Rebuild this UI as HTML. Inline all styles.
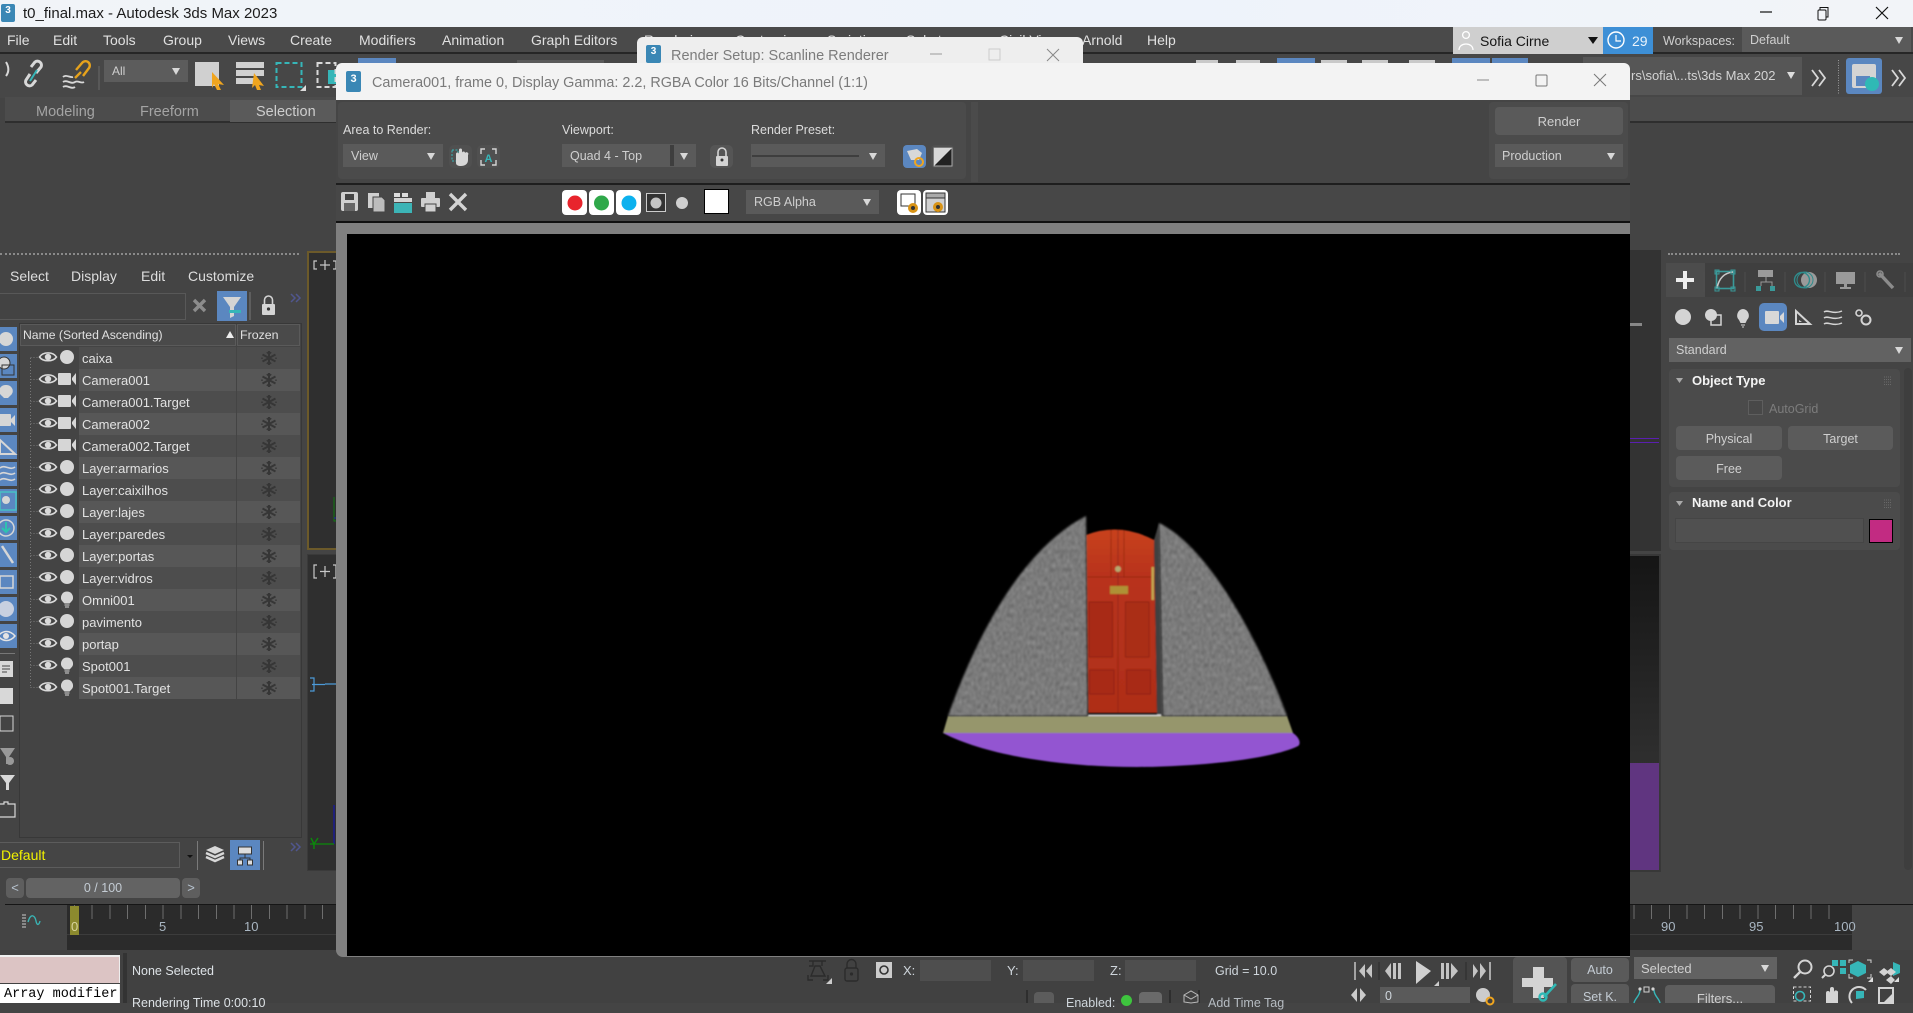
<!DOCTYPE html>
<html><head><meta charset="utf-8"><title>t0_final.max - Autodesk 3ds Max 2023</title>
<style>
html,body{margin:0;padding:0;width:1913px;height:1003px;overflow:hidden;background:#444;font-family:"Liberation Sans",sans-serif;font-size:13px;color:#d6d6d6}
.a,.t,.dd{position:absolute;box-sizing:border-box}
.t{white-space:nowrap;line-height:16px;height:16px}
.m{font-size:14px;color:#e0e0e0;top:32px}
.dd{background:#5a5a5a;color:#cfcfcf;line-height:25px;padding-left:8px;font-size:12.5px}
.dd:after{content:"";position:absolute;right:8px;top:50%;margin-top:-3px;border:4.5px solid transparent;border-top:7px solid #d8d8d8;border-bottom:0}
.btn{position:absolute;box-sizing:border-box;background:#5b5b5b;border-radius:4px;text-align:center;color:#cfcfcf;font-size:12.5px}
.row{position:absolute;left:79px;width:221px;height:22px}
.row b{position:absolute;left:0;top:0;width:157px;height:22px;font-weight:normal;font-size:13px;line-height:24px;padding-left:3px;color:#e2e2e2;box-sizing:border-box}
.row i{position:absolute;left:158px;top:0;width:63px;height:22px}
.o b,.o i{background:#4d4d4d}.e b,.e i{background:#575757}
svg{position:absolute;left:0;top:0;overflow:visible}
</style></head><body>

<!-- title bar -->
<div class="a" style="left:0;top:0;width:1913px;height:27px;background:linear-gradient(90deg,#f1f4f8,#eef3fb 60%,#f2f4f8)"></div>
<div class="a" style="left:1px;top:4px;width:14px;height:18px;background:#3a87b5;border-radius:2px;color:#fff;font:bold 10px/14px 'Liberation Sans',sans-serif;text-align:center">3</div>
<div class="t" style="left:23px;top:6px;font-size:15px;color:#1c1c1c">t0_final.max - Autodesk 3ds Max 2023</div>

<!-- menu -->
<div class="a" style="left:0;top:27px;width:1913px;height:27px;background:#4a4a4a;border-bottom:2px solid #262626"></div>
<div class="t m" style="left:7px">File</div><div class="t m" style="left:53px">Edit</div><div class="t m" style="left:103px">Tools</div><div class="t m" style="left:163px">Group</div><div class="t m" style="left:228px">Views</div><div class="t m" style="left:290px">Create</div><div class="t m" style="left:359px">Modifiers</div><div class="t m" style="left:442px">Animation</div><div class="t m" style="left:531px">Graph Editors</div><div class="t m" style="left:644px">Rendering</div><div class="t m" style="left:735px">Customize</div><div class="t m" style="left:827px">Scripting</div><div class="t m" style="left:906px">Substance</div><div class="t m" style="left:999px">Civil View</div><div class="t m" style="left:1082px">Arnold</div><div class="t m" style="left:1147px">Help</div>
<div class="a" style="left:1453px;top:27px;width:150px;height:27px;background:#cfcfcf"></div>
<div class="t" style="left:1480px;top:33px;font-size:14px;color:#151515">Sofia Cirne</div>
<div class="a" style="left:1603px;top:27px;width:50px;height:27px;background:#3d8fd6"></div>
<div class="t" style="left:1632px;top:33px;font-size:14px;color:#eaf3fb">29</div>
<div class="t" style="left:1663px;top:33px;font-size:12.5px;color:#cfcfcf">Workspaces:</div>
<div class="dd" style="left:1742px;top:27px;width:169px;height:25px;line-height:26px;background:#5a5a5a">Default</div>

<!-- main toolbar -->
<div class="a" style="left:0;top:54px;width:1913px;height:44px;background:#474747"></div>
<div class="dd" style="left:104px;top:60px;width:84px;height:22px;line-height:23px;background:#5c5c5c;font-size:12px">All</div>
<div class="a" style="left:358px;top:58px;width:38px;height:8px;background:#5b87c0"></div>
<div class="a" style="left:517px;top:60px;width:87px;height:6px;background:#5a5a5a"></div>
<div class="a" style="left:1196px;top:60px;width:22px;height:6px;background:#c9c9c9"></div>
<div class="a" style="left:1236px;top:60px;width:24px;height:6px;background:#c9c9c9"></div>
<div class="a" style="left:1277px;top:58px;width:38px;height:8px;background:#5b87c0"></div>
<div class="a" style="left:1321px;top:60px;width:26px;height:6px;background:#c9c9c9"></div>
<div class="a" style="left:1362px;top:60px;width:26px;height:6px;background:#c9c9c9"></div>
<div class="a" style="left:1409px;top:60px;width:26px;height:6px;background:#c9c9c9"></div>
<div class="a" style="left:1452px;top:58px;width:38px;height:8px;background:#5b87c0"></div>
<div class="a" style="left:1492px;top:58px;width:36px;height:8px;background:#5b87c0"></div>
<div class="a" style="left:1583px;top:57px;width:219px;height:38px;background:#565656"></div>
<div class="t" style="left:1631px;top:68px;font-size:13px;color:#d4d4d4">rs\sofia\...ts\3ds Max 202</div>
<div class="a" style="left:1787px;top:72px;border:4.5px solid transparent;border-top:7px solid #ddd;border-bottom:0"></div>
<div class="a" style="left:1846px;top:58px;width:36px;height:36px;background:#5b87c0;border-radius:3px"></div>

<!-- ribbon -->
<div class="a" style="left:5px;top:97px;width:1908px;height:26px;background:#4c4c4c;border-bottom:2px solid #2e2e2e"></div>
<div class="t" style="left:36px;top:104px;font-size:14.5px;color:#a4a4a4">Modeling</div>
<div class="t" style="left:140px;top:104px;font-size:14.5px;color:#a4a4a4">Freeform</div>
<div class="a" style="left:230px;top:100px;width:106px;height:22px;background:#5a5a5a"></div>
<div class="t" style="left:256px;top:104px;font-size:14.5px;color:#cdcdcd">Selection</div>

<!-- dotted -->
<div class="a" style="left:0;top:253px;width:299px;height:2px;border-top:2px dotted #8a8a8a"></div>
<div class="a" style="left:1668px;top:253px;width:232px;height:2px;border-top:2px dotted #8a8a8a"></div>

<!-- left scene explorer -->
<div class="t" style="left:10px;top:268px;font-size:14px;color:#ddd">Select</div>
<div class="t" style="left:71px;top:268px;font-size:14px;color:#ddd">Display</div>
<div class="t" style="left:141px;top:268px;font-size:14px;color:#ddd">Edit</div>
<div class="t" style="left:188px;top:268px;font-size:14px;color:#ddd">Customize</div>
<div class="a" style="left:-2px;top:293px;width:188px;height:27px;background:#434343;border:1px solid #585858"></div>
<div class="a" style="left:217px;top:291px;width:30px;height:30px;background:#5b87c0"></div>
<div class="a" style="left:19px;top:323px;width:283px;height:515px;border:1px solid #383838;background:#444"></div>
<div class="a" style="left:20px;top:324px;width:216px;height:22px;background:#4a4a4a;border:1px solid #5a5a5a"></div>
<div class="a" style="left:237px;top:324px;width:63px;height:22px;background:#4a4a4a;border:1px solid #5a5a5a"></div>
<div class="t" style="left:23px;top:327px;font-size:12.2px;color:#e0e0e0">Name (Sorted Ascending)</div>
<div class="t" style="left:240px;top:327px;font-size:12.4px;color:#e0e0e0">Frozen</div>

<div class="row o" style="top:347px"><b>caixa</b><i></i></div>
<div class="row e" style="top:369px"><b>Camera001</b><i></i></div>
<div class="row o" style="top:391px"><b>Camera001.Target</b><i></i></div>
<div class="row e" style="top:413px"><b>Camera002</b><i></i></div>
<div class="row o" style="top:435px"><b>Camera002.Target</b><i></i></div>
<div class="row e" style="top:457px"><b>Layer:armarios</b><i></i></div>
<div class="row o" style="top:479px"><b>Layer:caixilhos</b><i></i></div>
<div class="row e" style="top:501px"><b>Layer:lajes</b><i></i></div>
<div class="row o" style="top:523px"><b>Layer:paredes</b><i></i></div>
<div class="row e" style="top:545px"><b>Layer:portas</b><i></i></div>
<div class="row o" style="top:567px"><b>Layer:vidros</b><i></i></div>
<div class="row e" style="top:589px"><b>Omni001</b><i></i></div>
<div class="row o" style="top:611px"><b>pavimento</b><i></i></div>
<div class="row e" style="top:633px"><b>portap</b><i></i></div>
<div class="row o" style="top:655px"><b>Spot001</b><i></i></div>
<div class="row e" style="top:677px"><b>Spot001.Target</b><i></i></div>

<!-- left strip blue buttons -->
<div class="a" style="left:0;top:327px;width:17px;height:24px;background:#5b87c0"></div>
<div class="a" style="left:0;top:354px;width:17px;height:24px;background:#5b87c0"></div>
<div class="a" style="left:0;top:381px;width:17px;height:24px;background:#5b87c0"></div>
<div class="a" style="left:0;top:408px;width:17px;height:24px;background:#5b87c0"></div>
<div class="a" style="left:0;top:435px;width:17px;height:24px;background:#5b87c0"></div>
<div class="a" style="left:0;top:462px;width:17px;height:24px;background:#5b87c0"></div>
<div class="a" style="left:0;top:489px;width:17px;height:24px;background:#5b87c0"></div>
<div class="a" style="left:0;top:516px;width:17px;height:24px;background:#5b87c0"></div>
<div class="a" style="left:0;top:543px;width:17px;height:24px;background:#5b87c0"></div>
<div class="a" style="left:0;top:570px;width:17px;height:24px;background:#5b87c0"></div>
<div class="a" style="left:0;top:597px;width:17px;height:24px;background:#5b87c0"></div>
<div class="a" style="left:0;top:624px;width:17px;height:24px;background:#5b87c0"></div>
<div class="a" style="left:0;top:653px;width:15px;height:1px;background:#777"></div>

<!-- left bottom -->
<div class="a" style="left:-2px;top:842px;width:182px;height:26px;background:#454545;border:1px solid #5c5c5c"></div>
<div class="t" style="left:1px;top:847px;font-size:14px;color:#f2f200">Default</div>
<div class="a" style="left:197px;top:841px;width:1px;height:29px;background:#7a7a7a"></div>
<div class="a" style="left:230px;top:840px;width:30px;height:30px;background:#5b87c0"></div>
<div class="a" style="left:263px;top:841px;width:1px;height:29px;background:#7a7a7a"></div>
<div class="a" style="left:6px;top:878px;width:18px;height:20px;background:#5e5e5e;border-radius:4px;text-align:center;line-height:20px;color:#b8c4d0;font-size:13px">&lt;</div>
<div class="a" style="left:26px;top:878px;width:154px;height:20px;background:#636363;border-radius:4px;text-align:center;line-height:21px;color:#c4ccd4;font-size:12.5px">0 / 100</div>
<div class="a" style="left:182px;top:878px;width:18px;height:20px;background:#5e5e5e;border-radius:4px;text-align:center;line-height:20px;color:#b8c4d0;font-size:13px">&gt;</div>

<!-- viewports -->
<div class="a" style="left:307px;top:251px;width:40px;height:299px;background:#2f2f2f;border:2px solid #6c5a2a"></div>
<div class="a" style="left:307px;top:554px;width:40px;height:317px;background:#2f2f2f;border:1px solid #3a3a3a"></div>
<div class="a" style="left:1630px;top:250px;width:31px;height:301px;background:#333"></div>
<div class="a" style="left:1630px;top:438px;width:29px;height:1px;background:#5a1fb0"></div>
<div class="a" style="left:1630px;top:442px;width:29px;height:1px;background:#5a1fb0"></div>
<div class="a" style="left:1630px;top:323px;width:12px;height:3px;background:#888"></div>
<div class="a" style="left:1630px;top:554px;width:31px;height:318px;background:#383838"></div>
<div class="a" style="left:1630px;top:556px;width:29px;height:314px;background:linear-gradient(#151515,#3c3c3c)"></div>
<div class="a" style="left:1630px;top:763px;width:29px;height:107px;background:#603580"></div>

<!-- right panel -->
<div class="a" style="left:1666px;top:263px;width:247px;height:34px;background:#3f3f3f"></div>
<div class="a" style="left:1666px;top:263px;width:39px;height:34px;background:#4c4c4c"></div>
<div class="a" style="left:1759px;top:303px;width:28px;height:28px;background:#5b87c0;border-radius:5px"></div>
<div class="dd" style="left:1669px;top:338px;width:242px;height:24px;background:#626262;padding-left:7px;line-height:25px;font-size:12.5px">Standard</div>
<div class="a" style="left:1669px;top:369px;width:231px;height:118px;background:#4b4b4b;border-radius:4px"></div>
<div class="t" style="left:1692px;top:373px;font-size:13px;font-weight:bold;color:#f4f4f4">Object Type</div>
<div class="a" style="left:1748px;top:400px;width:15px;height:15px;background:#484848;border:1px solid #5e5e5e"></div>
<div class="t" style="left:1769px;top:401px;font-size:12.5px;color:#7c7c7c">AutoGrid</div>
<div class="btn" style="left:1676px;top:426px;width:106px;height:24px;line-height:26px">Physical</div>
<div class="btn" style="left:1788px;top:426px;width:105px;height:24px;line-height:26px">Target</div>
<div class="btn" style="left:1676px;top:456px;width:106px;height:24px;line-height:26px">Free</div>
<div class="a" style="left:1669px;top:492px;width:231px;height:58px;background:#4b4b4b;border-radius:4px"></div>
<div class="t" style="left:1692px;top:495px;font-size:13px;font-weight:bold;color:#f4f4f4">Name and Color</div>
<div class="a" style="left:1675px;top:518px;width:189px;height:25px;background:#505050;border:1px solid #454545"></div>
<div class="a" style="left:1869px;top:519px;width:24px;height:24px;background:#c22b82;border:1px solid #000"></div>
<div class="a" style="left:1904px;top:368px;width:8px;height:502px;background:#3e3e3e;border-radius:4px"></div>

<!-- timeline -->
<div class="a" style="left:5px;top:904px;width:1908px;height:1px;background:#161616"></div>
<div class="a" style="left:67px;top:905px;width:1785px;height:45px;background:#2b2b2b"></div>
<div class="a" style="left:67px;top:934px;width:1785px;height:1px;background:#3c3c3c"></div>
<div class="a" style="left:74px;top:905px;width:1771px;height:14px;background:repeating-linear-gradient(90deg,#6e6e6e 0,#6e6e6e 1px,transparent 1px,transparent 17.72px)"></div>
<div class="a" style="left:70px;top:906px;width:9px;height:29px;background:#8c8a2e"></div>
<div class="t" style="left:71px;top:919px;font-size:13px;color:#d8d49c">0</div>
<div class="t" style="left:159px;top:919px;font-size:13px;color:#a9b6c2">5</div>
<div class="t" style="left:244px;top:919px;font-size:13px;color:#a9b6c2">10</div>
<div class="t" style="left:1661px;top:919px;font-size:13px;color:#a9b6c2">90</div>
<div class="t" style="left:1749px;top:919px;font-size:13px;color:#a9b6c2">95</div>
<div class="t" style="left:1834px;top:919px;font-size:13px;color:#a9b6c2">100</div>

<!-- status -->
<div class="a" style="left:0;top:950px;width:1913px;height:53px;background:#414141"></div>
<div class="a" style="left:0;top:955px;width:120px;height:28px;background:#dcc4c4;border-top:2px solid #eee;border-right:1px solid #eee"></div>
<div class="a" style="left:0;top:984px;width:120px;height:19px;background:#fff;border-right:1px solid #eee"></div>
<div class="t" style="left:4px;top:987px;font:13.5px/16px 'Liberation Mono',monospace;color:#000">Array modifier</div>
<div class="a" style="left:123px;top:953px;width:4px;height:50px;background:#333"></div>
<div class="t" style="left:132px;top:963px;font-size:12.5px;color:#dde2e6">None Selected</div>
<div class="t" style="left:132px;top:995px;font-size:12.5px;color:#dde2e6">Rendering Time  0:00:10</div>

<div class="t" style="left:903px;top:963px;font-size:13px;color:#cfd6dc">X:</div>
<div class="a" style="left:920px;top:960px;width:71px;height:21px;background:#4e4e4e"></div>
<div class="t" style="left:1007px;top:963px;font-size:13px;color:#cfd6dc">Y:</div>
<div class="a" style="left:1023px;top:960px;width:71px;height:21px;background:#4e4e4e"></div>
<div class="t" style="left:1110px;top:963px;font-size:13px;color:#cfd6dc">Z:</div>
<div class="a" style="left:1125px;top:960px;width:71px;height:21px;background:#4e4e4e"></div>
<div class="t" style="left:1215px;top:963px;font-size:12.5px;color:#cfd6dc">Grid = 10.0</div>
<div class="a" style="left:1034px;top:992px;width:20px;height:11px;background:#5c5c5c;border-radius:4px 4px 0 0"></div>
<div class="t" style="left:1066px;top:995px;font-size:12.5px;color:#cfd6dc">Enabled:</div>
<div class="a" style="left:1121px;top:995px;width:11px;height:11px;background:#3ec43e;border-radius:50%"></div>
<div class="a" style="left:1139px;top:992px;width:23px;height:11px;background:#6a6a6a;border-radius:4px 4px 0 0"></div>
<div class="t" style="left:1208px;top:995px;font-size:12.5px;color:#b6bcc2">Add Time Tag</div>
<div class="a" style="left:1380px;top:987px;width:90px;height:16px;background:#5a5a5a"></div>
<div class="t" style="left:1385px;top:988px;font-size:12.5px;color:#cfd6dc">0</div>
<div class="a" style="left:1513px;top:957px;width:54px;height:46px;background:#545454;border-radius:4px 4px 0 0"></div>
<div class="btn" style="left:1571px;top:958px;width:58px;height:24px;line-height:25px;background:#5a5a5a;color:#c4ccd4">Auto</div>
<div class="btn" style="left:1571px;top:984px;width:58px;height:19px;line-height:27px;background:#5a5a5a;color:#c4ccd4;border-radius:4px 4px 0 0">Set K.</div>
<div class="dd" style="left:1634px;top:957px;width:143px;height:22px;line-height:23px;background:#626262;padding-left:7px;font-size:13px">Selected</div>
<div class="btn" style="left:1665px;top:985px;width:110px;height:18px;line-height:28px;background:#5e5e5e;border-radius:4px 4px 0 0;font-size:13px">Filters...</div>

<!-- background icons -->
<svg width="1913" height="1003" viewBox="0 0 1913 1003" style="z-index:1">
<defs>
<g id="eye"><path d="M-8.5 0C-5 -5.5 5 -5.5 8.5 0C5 5 -5 5 -8.5 0Z" fill="none" stroke="#d9d9d9" stroke-width="1.6"/><circle r="3.2" fill="#d9d9d9"/></g>
<circle id="sph" r="7" fill="#d6d6d6"/>
<g id="cam"><rect x="-9" y="-6" width="13" height="12" rx="1" fill="#d6d6d6"/><path d="M5 -1L9 -6V6L5 1Z" fill="#d6d6d6"/></g>
<g id="bulb" fill="#d6d6d6"><path d="M0 -7.5A6 6 0 0 1 4 3L2.5 4.5H-2.5L-4 3A6 6 0 0 1 0 -7.5Z"/><rect x="-2.5" y="5.5" width="5" height="1"/><rect x="-2" y="7.5" width="4" height="1"/></g>
<g id="snow" stroke="#363636" stroke-width="2" fill="none"><path d="M0 -7V7M-6.500 -3.500L6.500 3.500M-6.500 3.500L6.500 -3.500"/><path d="M-2.200 -5.800L0 -3.800L2.200 -5.800M-2.200 5.800L0 3.800L2.200 5.800M-7 -.500V1M7 -.500V1" stroke-width="1.400"/></g>
</defs>

<!-- tree -->
<path d="M30.5 358V688M30.5 357.5H39M30.5 379.5H39M30.5 401.5H39M30.5 423.5H39M30.5 445.5H39M30.5 467.5H39M30.5 489.5H39M30.5 511.5H39M30.5 533.5H39M30.5 555.5H39M30.5 577.5H39M30.5 599.5H39M30.5 621.5H39M30.5 643.5H39M30.5 665.5H39M30.5 687.5H39" stroke="#777" stroke-dasharray="1 2" fill="none"/>
<use href="#eye" x="48" y="357"/><use href="#eye" x="48" y="379"/><use href="#eye" x="48" y="401"/><use href="#eye" x="48" y="423"/><use href="#eye" x="48" y="445"/><use href="#eye" x="48" y="467"/><use href="#eye" x="48" y="489"/><use href="#eye" x="48" y="511"/><use href="#eye" x="48" y="533"/><use href="#eye" x="48" y="555"/><use href="#eye" x="48" y="577"/><use href="#eye" x="48" y="599"/><use href="#eye" x="48" y="621"/><use href="#eye" x="48" y="643"/><use href="#eye" x="48" y="665"/><use href="#eye" x="48" y="687"/>
<use href="#sph" x="67" y="357"/><use href="#cam" x="67" y="379"/><use href="#cam" x="67" y="401"/><use href="#cam" x="67" y="423"/><use href="#cam" x="67" y="445"/><use href="#sph" x="67" y="467"/><use href="#sph" x="67" y="489"/><use href="#sph" x="67" y="511"/><use href="#sph" x="67" y="533"/><use href="#sph" x="67" y="555"/><use href="#sph" x="67" y="577"/><use href="#bulb" x="67" y="599"/><use href="#sph" x="67" y="621"/><use href="#sph" x="67" y="643"/><use href="#bulb" x="67" y="665"/><use href="#bulb" x="67" y="687"/>
<use href="#snow" x="269" y="358"/><use href="#snow" x="269" y="380"/><use href="#snow" x="269" y="402"/><use href="#snow" x="269" y="424"/><use href="#snow" x="269" y="446"/><use href="#snow" x="269" y="468"/><use href="#snow" x="269" y="490"/><use href="#snow" x="269" y="512"/><use href="#snow" x="269" y="534"/><use href="#snow" x="269" y="556"/><use href="#snow" x="269" y="578"/><use href="#snow" x="269" y="600"/><use href="#snow" x="269" y="622"/><use href="#snow" x="269" y="644"/><use href="#snow" x="269" y="666"/><use href="#snow" x="269" y="688"/>
<path d="M230 331L234 338H226Z" fill="#eee"/>

<!-- explorer top icons -->
<path d="M194 300L205 311M205 300L194 311" stroke="#8c8c8c" stroke-width="3.4"/>
<path d="M223 297H241L234 307V316L230 318V307Z" fill="#d4d4d4"/><path d="M229 310H241V313H229Z" fill="#36b6b8"/>
<path d="M250 292V320" stroke="#777"/>
<rect x="262" y="304" width="13" height="11" rx="1" fill="#d4d4d4"/><path d="M264.5 304V300A4 4 0 0 1 272.5 300V304" stroke="#d4d4d4" stroke-width="1.6" fill="none"/><circle cx="268.5" cy="309" r="1.6" fill="#333"/>
<path d="M291 294L295 298L291 302M296 294L300 298L296 302M291 843L295 847L291 851M296 843L300 847L296 851" stroke="#50568e" stroke-width="1.5" fill="none"/>

<!-- left strip glyphs -->
<circle cx="6" cy="339" r="7" fill="#d6d6d6"/>
<circle cx="4" cy="363" r="6" fill="#d6d6d6" stroke="#333"/><rect x="2" y="365" width="12" height="10" fill="none" stroke="#333"/>
<path d="M6 385A6 6 0 0 1 10 396L8 398H4L2 396A6 6 0 0 1 6 385Z" fill="#d6d6d6"/>
<rect x="-2" y="414" width="13" height="12" rx="1" fill="#d6d6d6"/><path d="M11 419L15 415V426L11 422Z" fill="#d6d6d6"/>
<path d="M0 440L15 454H0Z" fill="none" stroke="#d6d6d6" stroke-width="2"/>
<path d="M0 468C5 464 10 471 15 467M0 474C5 470 10 477 15 473M0 480C5 476 10 483 15 479" stroke="#d6d6d6" stroke-width="1.6" fill="none"/>
<rect x="0" y="492" width="16" height="18" fill="none" stroke="#48c0c2" stroke-width="1.5"/><circle cx="6" cy="500" r="4" fill="#d6d6d6"/>
<circle cx="6" cy="528" r="8" fill="none" stroke="#d6d6d6" stroke-width="1.5"/><path d="M6 522V532M2 528L6 532L10 528" stroke="#2fc2b0" stroke-width="2" fill="none"/>
<path d="M2 546L13 563" stroke="#d6d6d6" stroke-width="2.5"/>
<rect x="0" y="576" width="13" height="12" fill="none" stroke="#d6d6d6" stroke-width="1.5"/>
<circle cx="6" cy="609" r="8" fill="#c8d0e0"/>
<path d="M-2 636C3 630 10 630 15 636C10 642 3 642 -2 636Z" fill="none" stroke="#e4e4e4" stroke-width="1.5"/><circle cx="6" cy="636" r="3" fill="#e4e4e4"/>
<rect x="0" y="661" width="13" height="16" fill="#d8d8d8"/><path d="M2 666H10M2 669H10M2 672H7" stroke="#444"/>
<rect x="0" y="688" width="13" height="16" fill="#d8d8d8"/>
<rect x="0" y="716" width="13" height="15" fill="none" stroke="#d8d8d8"/>
<path d="M0 748H15L9 757V764H6V757Z" fill="#999"/><circle cx="10" cy="761" r="4" fill="#999"/>
<path d="M0 775H15L9 783V790H6V783Z" fill="#d8d8d8"/>
<path d="M0 804H4V802H8V804H15V817H0" fill="none" stroke="#d8d8d8" stroke-width="1.2"/>

<!-- layer icons -->
<path d="M187 855H193L190 858Z" fill="#111"/>
<path d="M215 846L224 850L215 854L206 850Z" fill="#d8d8d8"/><path d="M206 853L215 857L224 853M206 857L215 861L224 857" stroke="#d8d8d8" stroke-width="2.4" fill="none"/>
<path d="M245 853V858M240 862V858H250V862" stroke="#333" fill="none"/><rect x="238.5" y="847" width="13" height="7" fill="#ddd" stroke="#333"/><rect x="237.5" y="860" width="5" height="5" fill="#ddd" stroke="#333"/><rect x="247.5" y="860" width="5" height="5" fill="#ddd" stroke="#333"/>

<!-- viewport labels -->
<path d="M317 261H314V269H317M333 261H336V269H333M320 265H330M325 260V270" stroke="#c8c8c8" stroke-width="1.2" fill="none"/>
<path d="M317 565H314V578H317M333 565H336V578H333M320 571.500H330M325 566V577" stroke="#c8c8c8" stroke-width="1.2" fill="none"/>
<path d="M334 497V521H339" stroke="#0f7a0f" fill="none"/><path d="M334 518H339" stroke="#2222b8" fill="none"/>
<path d="M334 805V844" stroke="#1616a8" stroke-width="1.2"/><path d="M310 844H334" stroke="#0a8a0a" stroke-width="1.2"/>
<path d="M311 838L314 844L318 838M314 844V849" stroke="#0a8a0a" fill="none" stroke-width="1.4"/>
<path d="M310 678H314V691H310M312 684.500H325M325 684H336" stroke="#4c9ad8" stroke-width="1.2" fill="none"/>

<!-- toolbar icons -->
<path d="M6 62C9 67 9 72 6 76" stroke="#d8d8d8" stroke-width="2" fill="none"/>
<path d="M30 74L26 80A4 4 0 0 0 32 85L36 80M36 73L41 67A4 4 0 0 0 35 62L31 67" stroke="#d8d8d8" stroke-width="3" fill="none"/><path d="M30 81L37 70" stroke="#36b6b8" stroke-width="2"/>
<path d="M63 82C67 79 71 85 75 82C78 80 81 84 84 82M63 87C67 84 71 90 75 87M63 77C66 74 70 78 73 77" stroke="#d8d8d8" stroke-width="1.8" fill="none"/>
<path d="M76 70L82 63A4 4 0 0 1 89 68L83 76M75 78L81 72" stroke="#e6a21c" stroke-width="2.4" fill="none"/>
<path d="M99 66V90" stroke="#6a6a6a"/>
<rect x="195" y="62" width="24" height="24" fill="#d0d0d0"/><path d="M212 72L224 85L218 84L221 90L217 90L214 84L212 88Z" fill="#f0a51e"/>
<rect x="236" y="62" width="28" height="6" fill="#d0d0d0"/><rect x="236" y="70" width="28" height="6" fill="#d0d0d0"/><rect x="236" y="78" width="20" height="6" fill="#d0d0d0"/><path d="M254 73L264 86L259 85L261 90L257 90L255 85L252 88Z" fill="#f0a51e"/>
<rect x="276.500" y="63" width="25" height="24" fill="none" stroke="#36b6b8" stroke-width="2" stroke-dasharray="5 3"/>
<path d="M306 91H300L306 85Z" fill="#ddd"/>
<rect x="328" y="70" width="10" height="14" fill="#36b6b8"/><rect x="317.500" y="63" width="18" height="24" fill="none" stroke="#d8d8d8" stroke-width="2" stroke-dasharray="5 3"/>
<!-- toolbar right -->
<path d="M1812 70L1818 78L1812 86M1819 70L1825 78L1819 86M1892 70L1898 78L1892 86M1899 70L1905 78L1899 86" stroke="#d8d8d8" stroke-width="1.8" fill="none"/>
<path d="M1838.500 60V94" stroke="#9a9a9a" stroke-dasharray="1 1.5"/>
<rect x="1852" y="64" width="24" height="24" rx="2" fill="#d4d4d4"/><rect x="1856" y="76" width="14" height="10" fill="#5b87c0"/><circle cx="1872" cy="84" r="7" fill="#2fb9b5"/>
<circle cx="1616" cy="40" r="8" fill="none" stroke="#fff" stroke-width="1.4"/><path d="M1616 35V41H1621" stroke="#fff" stroke-width="1.2" fill="none"/>
<circle cx="1466" cy="35" r="3.4" fill="none" stroke="#fff" stroke-width="1.3"/><path d="M1459 50C1459 42 1473 42 1473 50" stroke="#fff" stroke-width="1.3" fill="none"/>
<path d="M1588 37H1598L1593 44Z" fill="#111"/>

<!-- right panel icons -->
<path d="M1685 271V289M1676 280H1694" stroke="#ededed" stroke-width="4"/>
<rect x="1716.500" y="271.500" width="17" height="17" fill="none" stroke="#3a9a9a" stroke-width="1.6"/><path d="M1717 288C1719 278 1724 273 1733 272" fill="none" stroke="#c8c8c8" stroke-width="1.6"/>
<rect x="1715" y="270" width="4" height="4" fill="none" stroke="#3a9a9a"/><rect x="1731" y="270" width="4" height="4" fill="none" stroke="#3a9a9a"/><rect x="1715" y="287" width="4" height="4" fill="none" stroke="#3a9a9a"/><rect x="1731" y="287" width="4" height="4" fill="none" stroke="#3a9a9a"/>
<rect x="1758" y="270" width="15" height="7" fill="#9a9a9a"/><path d="M1766 277V282M1761 286V282H1772V286" stroke="#9a9a9a" fill="none"/><rect x="1756" y="286" width="5" height="5" fill="#3a9a9a"/><rect x="1770" y="286" width="5" height="5" fill="#3a9a9a"/>
<circle cx="1809" cy="280" r="8" fill="#9a9a9a"/><circle cx="1802" cy="280" r="7.500" fill="none" stroke="#2f8c8c" stroke-width="1.4"/><circle cx="1805" cy="280" r="8" fill="none" stroke="#2f8c8c" stroke-width="1"/>
<rect x="1836" y="272" width="19" height="12" fill="#9a9a9a"/><rect x="1844" y="284" width="3" height="3" fill="#9a9a9a"/><rect x="1840" y="287" width="11" height="2" fill="#9a9a9a"/>
<path d="M1879 273L1893 288" stroke="#8c8c8c" stroke-width="3.4"/><circle cx="1880" cy="274" r="3" fill="none" stroke="#8c8c8c" stroke-width="1.6"/>
<path d="M1704 272V292M1745 272V292M1785 272V292M1825 272V292M1865 272V292M1905 272V292" stroke="#4e4e4e"/>
<circle cx="1683" cy="317" r="8" fill="#d4d4d4"/>
<circle cx="1711" cy="315" r="6" fill="#d4d4d4"/><rect x="1711" y="315" width="10" height="10" fill="none" stroke="#d4d4d4" stroke-width="1.5"/>
<path d="M1743 309A6.500 6.500 0 0 1 1747 320L1745.500 323H1740.500L1739 320A6.500 6.500 0 0 1 1743 309Z" fill="#d4d4d4"/><path d="M1741 325H1745M1742 327H1744" stroke="#d4d4d4"/>
<rect x="1765" y="311" width="14" height="13" rx="1" fill="#d8d8d8"/><path d="M1780 316L1784 312V323L1780 319Z" fill="#d8d8d8"/>
<path d="M1796 311V324H1810Z" fill="none" stroke="#d4d4d4" stroke-width="2"/><path d="M1799 320V322H1802Z" fill="#d4d4d4"/>
<path d="M1824 312C1828 309 1833 315 1842 311M1824 318C1828 315 1833 321 1842 317M1824 324C1828 321 1833 327 1842 323" stroke="#d4d4d4" stroke-width="1.5" fill="none"/>
<circle cx="1859" cy="313" r="3" fill="none" stroke="#d4d4d4" stroke-width="1.6"/><circle cx="1866" cy="320" r="4.500" fill="none" stroke="#d4d4d4" stroke-width="2"/>
<path d="M1676 378H1683L1679.500 383Z" fill="#aaa"/><path d="M1676 501H1683L1679.500 506Z" fill="#aaa"/>
<path d="M1884 377H1891M1884 379.500H1891M1884 382H1891M1884 384.500H1891M1884 500H1891M1884 502.500H1891M1884 505H1891M1884 507.500H1891" stroke="#6a6a6a" stroke-dasharray="1 1"/>

<!-- curve editor -->
<path d="M22 915H26M22 918H26M22 921H26M22 924H26M22 927H26" stroke="#ccc"/><path d="M28 922C31 912 35 916 36 921C37 926 39 925 40 921" stroke="#39b4b4" stroke-width="1.4" fill="none"/>

<!-- bottom icons -->
<path d="M809 966H813V961H822V966M813 961H809M826 961H822M815 966H820L825 976H811ZM808 975V980H813M828 975V980H823" stroke="#2b2b2b" stroke-width="1.4" fill="none"/><path d="M826 984H832V978Z" fill="#ccc"/>
<rect x="845" y="968" width="13" height="13" rx="2" fill="none" stroke="#2b2b2b" stroke-width="1.4"/><path d="M847 968V964A4.500 4.500 0 0 1 856 964V968" stroke="#2b2b2b" stroke-width="1.4" fill="none"/><circle cx="851.500" cy="974" r="1.600" fill="#2b2b2b"/>
<rect x="876" y="962" width="16" height="16" fill="#ccc"/><circle cx="884" cy="970" r="4" fill="none" stroke="#333" stroke-width="1.6"/>
<path d="M1355 962V980" stroke="#c4c4c4" stroke-width="1.500"/><path d="M1359 971L1365 964V978ZM1366 971L1372 964V978Z" fill="#c4c4c4"/><path d="M1379 962V980" stroke="#2a2a2a"/>
<path d="M1385 971L1391 963V979Z M1393 963H1396V979H1393ZM1398 963H1401V979H1398Z" fill="#c4c4c4"/>
<path d="M1416 961L1431 971L1416 984Z" fill="#d0d0d0"/><path d="M1434 986H1439V981Z" fill="#ccc"/>
<path d="M1441 963H1444V979H1441ZM1446 963H1449V979H1446ZM1451 963L1458 971L1451 979Z" fill="#c4c4c4"/><path d="M1466 962V980" stroke="#2a2a2a"/>
<path d="M1473 964L1478 971L1473 978ZM1480 963L1486 971L1480 979Z" fill="#c4c4c4"/><path d="M1490 962V980" stroke="#c4c4c4" stroke-width="1.6"/>
<path d="M1027 990V1003M1170 990V1003M1199 990V1003" stroke="#1c1c1c"/>
<path d="M1184 995L1191 991L1198 995V1002L1191 1003L1184 1002ZM1184 995L1191 999L1198 995" stroke="#bbb" fill="none"/>
<path d="M1357 988L1351 995L1357 1002ZM1360 988L1366 995L1360 1002Z" fill="#ccc"/>
<circle cx="1483" cy="995" r="7" fill="#ccc"/><circle cx="1490" cy="1001" r="3.500" fill="none" stroke="#f0a51e" stroke-width="2"/>
<path d="M1538.500 967V998" stroke="#d4d4d4" stroke-width="11"/><path d="M1522 982.500H1553" stroke="#d4d4d4" stroke-width="9"/><path d="M1544 997L1556 984" stroke="#2fb9b5" stroke-width="2.600"/><circle cx="1543" cy="997" r="3.500" fill="none" stroke="#2fb9b5" stroke-width="2.400"/>
<circle cx="1805" cy="967" r="6.500" fill="none" stroke="#d4d4d4" stroke-width="2"/><path d="M1800 972L1794 978" stroke="#d4d4d4" stroke-width="2.400"/>
<circle cx="1829" cy="971" r="5" fill="none" stroke="#d4d4d4" stroke-width="1.6"/><path d="M1825 975L1822 978" stroke="#d4d4d4" stroke-width="2"/><path d="M1832 960H1838V966H1832ZM1840 960H1846V966H1840ZM1840 968H1846V974H1840Z" fill="#36b6b8"/>
<path d="M1858 961L1866 965V973L1858 977L1850 973V965Z" fill="#36b6b8"/><path d="M1849 963V960H1853M1867 960H1871V963M1871 974V978H1867M1853 978H1849V974" stroke="#d4d4d4" fill="none"/><path d="M1873 982H1868L1873 977Z" fill="#ddd"/>
<path d="M1893 962L1900 965V973L1893 976Z" fill="#36b6b8"/><path d="M1886 972L1891 968L1896 972L1891 976ZM1879 972L1884 968L1889 972L1884 976ZM1886 980L1891 976L1895 980L1891 984Z" fill="#d4d4d4"/><path d="M1899 982H1894L1899 977Z" fill="#ddd"/>
<rect x="1793.500" y="987" width="17" height="14" fill="none" stroke="#d4d4d4" stroke-dasharray="3 2"/><circle cx="1800" cy="996" r="4.500" fill="none" stroke="#36b6b8" stroke-width="1.6"/>
<path d="M1826 1003V993A2 2 0 0 1 1830 993V989A2 2 0 0 1 1834 989V992A2 2 0 0 1 1838 993V1003Z" fill="#d4d4d4"/>
<path d="M1852 1003A9 9 0 0 1 1866 990" fill="none" stroke="#d4d4d4" stroke-width="2"/><path d="M1856 991L1864 991L1864 998L1856 999Z" fill="#36b6b8"/>
<rect x="1879" y="988" width="14" height="15" fill="none" stroke="#d4d4d4" stroke-width="2"/><path d="M1883 1003L1893 993V1003Z" fill="#d4d4d4"/>
<g transform="translate(-93 0)">
<path d="M1733 990C1733 996 1728 998 1727 1003M1747 990C1747 996 1752 998 1753 1003" fill="none" stroke="#36b6b8" stroke-width="1.4"/>
<rect x="1737" y="987" width="5" height="5" fill="none" stroke="#d4d4d4"/><circle cx="1733" cy="989" r="1.600" fill="#d4d4d4"/><circle cx="1746" cy="989" r="1.600" fill="#d4d4d4"/>
</g>
</svg>

<!-- Render Setup window -->
<div class="a" style="left:637px;top:37px;width:446px;height:30px;background:#eeeeee;border-radius:6px 6px 0 0;z-index:2"></div>
<div class="a" style="left:646px;top:45px;width:15px;height:18px;background:#3a87b5;border-radius:2px;color:#fff;font:bold 10px/14px 'Liberation Sans',sans-serif;text-align:center;z-index:2">3</div>
<div class="t" style="left:671px;top:48px;font-size:14.5px;color:#7c7c7c;z-index:2">Render Setup: Scanline Renderer</div>

<!-- Render frame window -->
<div class="a" style="left:336px;top:63px;width:1294px;height:37px;background:#f3f3f3;border-radius:6px 6px 0 0;z-index:3"></div>
<div class="a" style="left:336px;top:100px;width:1294px;height:83px;background:#454545;z-index:3"></div>
<div class="a" style="left:336px;top:183px;width:1294px;height:2px;background:#1e1e1e;z-index:3"></div>
<div class="a" style="left:336px;top:185px;width:1294px;height:36px;background:#474747;z-index:3"></div>
<div class="a" style="left:336px;top:221px;width:1294px;height:2px;background:#111;z-index:3"></div>
<div class="a" style="left:336px;top:223px;width:1294px;height:734px;background:#808080;border-radius:0 0 0 7px;z-index:3"></div>
<div class="a" style="left:347px;top:234px;width:1283px;height:722px;background:#000;z-index:3"></div>
<div class="a" style="left:338px;top:102px;width:628px;height:77px;background:#4b4b4b;border-radius:4px;z-index:3"></div>
<div class="a" style="left:971px;top:102px;width:7px;height:80px;background:#4b4b4b;z-index:3"></div>
<div class="a" style="left:1489px;top:102px;width:139px;height:77px;background:#4b4b4b;border-radius:4px;z-index:3"></div>
<div class="a" style="left:346px;top:71px;width:15px;height:21px;background:#3a87b5;border-radius:2px;color:#fff;font:bold 11px/16px 'Liberation Sans',sans-serif;text-align:center;z-index:3">3</div>
<div class="t" style="left:372px;top:75px;font-size:14.4px;color:#7a7a7a;z-index:3">Camera001, frame 0, Display Gamma: 2.2, RGBA Color 16 Bits/Channel (1:1)</div>

<div class="t" style="left:343px;top:122px;font-size:12.5px;color:#dcdcdc;z-index:3">Area to Render:</div>
<div class="t" style="left:562px;top:122px;font-size:12.5px;color:#dcdcdc;z-index:3">Viewport:</div>
<div class="t" style="left:751px;top:122px;font-size:12.5px;color:#dcdcdc;z-index:3">Render Preset:</div>
<div class="dd" style="left:343px;top:144px;width:100px;height:23px;background:#5a5a5a;z-index:3">View</div>
<div class="dd" style="left:562px;top:144px;width:134px;height:23px;z-index:3">Quad 4 - Top</div>
<div class="a" style="left:670px;top:145px;width:4px;height:21px;background:#3e3e3e;z-index:3"></div>
<div class="dd" style="left:751px;top:144px;width:134px;height:23px;z-index:3"></div>
<div class="a" style="left:752px;top:155px;width:107px;height:2px;background:#3e3e3e;z-index:3"></div>
<div class="a" style="left:449px;top:145px;width:23px;height:23px;background:#505050;border-radius:5px;z-index:3"></div>
<div class="a" style="left:477px;top:145px;width:23px;height:23px;background:#505050;border-radius:5px;z-index:3"></div>
<div class="a" style="left:710px;top:145px;width:23px;height:23px;background:#555;border-radius:5px;z-index:3"></div>
<div class="a" style="left:903px;top:145px;width:23px;height:23px;background:#5b87c0;border-radius:4px;z-index:3"></div>
<div class="a" style="left:931px;top:145px;width:23px;height:23px;background:#505050;border-radius:4px;z-index:3"></div>
<div class="btn" style="left:1495px;top:107px;width:128px;height:28px;line-height:29px;background:#5a5a5a;z-index:3;font-size:13px">Render</div>
<div class="dd" style="left:1495px;top:144px;width:128px;height:23px;background:#5a5a5a;padding-left:7px;z-index:3">Production</div>

<div class="a" style="left:562px;top:190px;width:25px;height:25px;background:#fff;border-radius:4px;z-index:3"></div>
<div class="a" style="left:589px;top:190px;width:25px;height:25px;background:#fff;border-radius:4px;z-index:3"></div>
<div class="a" style="left:616px;top:190px;width:25px;height:25px;background:#fff;border-radius:4px;z-index:3"></div>
<div class="a" style="left:646px;top:193px;width:20px;height:19px;background:#333;border:1px solid #ccc;z-index:3"></div>
<div class="a" style="left:704px;top:189px;width:25px;height:25px;background:#fff;border:1px solid #000;z-index:3"></div>
<div class="dd" style="left:746px;top:190px;width:133px;height:24px;line-height:25px;z-index:3">RGB Alpha</div>
<div class="a" style="left:897px;top:190px;width:24px;height:25px;background:#fff;border-radius:4px;z-index:3"></div>
<div class="a" style="left:923px;top:190px;width:25px;height:25px;background:#fff;border-radius:4px;z-index:3"></div>

<!-- top icons + render -->
<svg width="1913" height="1003" viewBox="0 0 1913 1003" style="z-index:4">
<defs>
<filter id="cw" x="-5%" y="-5%" width="110%" height="110%" color-interpolation-filters="sRGB">
<feTurbulence type="fractalNoise" baseFrequency=".5 .22" numOctaves="3" seed="4"/>
<feColorMatrix values=".3 0 0 0 .33 .3 0 0 0 .33 .3 0 0 0 .33 0 0 0 0 1"/>
<feComposite in2="SourceGraphic" operator="in"/>
<feGaussianBlur stdDeviation="1"/>
</filter>
<filter id="bl" x="-5%" y="-5%" width="110%" height="110%"><feGaussianBlur stdDeviation=".7"/></filter>
<clipPath id="dc"><path d="M1086 535Q1120 522 1154 540L1157 713H1088Z"/></clipPath>
<linearGradient id="dg" x1="0" y1="0" x2="0" y2="1"><stop offset="0" stop-color="#c8421f"/><stop offset=".25" stop-color="#b8321a"/><stop offset="1" stop-color="#ae2e19"/></linearGradient>
</defs>

<!-- window buttons main -->
<path d="M1760 12H1772" stroke="#111" stroke-width="1.2"/>
<rect x="1818" y="10" width="8" height="10" fill="none" stroke="#111" rx="1"/><path d="M1820 10V7.500H1828V17H1826" fill="none" stroke="#111"/>
<path d="M1876 7L1888 19M1888 7L1876 19" stroke="#111" stroke-width="1.2"/>
<!-- Render Setup controls -->
<path d="M930 54H942" stroke="#999"/><rect x="989" y="49" width="11" height="11" fill="none" stroke="#ccc"/><path d="M1047 49L1059 61M1059 49L1047 61" stroke="#888"/>
<!-- render window controls -->
<path d="M1477 80H1489" stroke="#888"/><rect x="1536" y="75" width="11" height="11" rx="1" fill="none" stroke="#777"/><path d="M1594 74L1606 86M1606 74L1594 86" stroke="#777"/>

<!-- render toolbar icons -->
<path d="M452 150H458V161H452Z" fill="none" stroke="#36b6b8" stroke-dasharray="2 1.500"/>
<path d="M456 163V154A1.500 1.500 0 0 1 459 154V150A1.500 1.500 0 0 1 462 150V153A1.500 1.500 0 0 1 465 153A1.500 1.500 0 0 1 468 155V160C468 164 465 166 461 166C458 166 456 165 456 163Z" fill="#d8d8d8"/>
<path d="M481 154V149H485M492 149H496V154M496 160V165H492M485 165H481V160" stroke="#d4d4d4" stroke-width="1.400" fill="none"/>
<text x="484.500" y="162" font-family="Liberation Sans,sans-serif" font-weight="bold" font-size="11" fill="#38b6b8">A</text>
<rect x="716" y="156" width="12" height="10" rx="1" fill="#d4d4d4"/><path d="M718 156V152A4 4 0 0 1 726 152V156" stroke="#d4d4d4" stroke-width="1.600" fill="none"/><circle cx="722" cy="160" r="1.500" fill="#333"/>
<path d="M907 151L917 149L922 153L919 160L911 160Z" fill="#d8d8d8"/><circle cx="919" cy="162" r="4" fill="none" stroke="#f0a51e" stroke-width="2"/>
<rect x="934" y="148" width="18" height="18" fill="#222" stroke="#aaa"/><path d="M934 148H952L934 166Z" fill="#d8d8d8"/>

<rect x="341" y="192" width="17" height="19" rx="2" fill="#d0d0d0"/><rect x="345" y="194" width="9" height="6" fill="#444"/><rect x="344" y="203" width="11" height="8" fill="#666"/>
<rect x="368" y="193" width="11" height="15" fill="#d0d0d0"/><path d="M373 197H382L385 200V212H373Z" fill="#bdbdbd" stroke="#444"/>
<rect x="394" y="193" width="6" height="4" fill="#ddd"/><rect x="402" y="193" width="6" height="4" fill="#ddd"/><rect x="394" y="198" width="18" height="4" fill="#d4d4d4"/><rect x="394" y="203" width="18" height="10" fill="#3cb4b6"/>
<rect x="426" y="192" width="9" height="6" fill="#d0d0d0"/><rect x="421" y="198" width="19" height="9" rx="1" fill="#d0d0d0"/><rect x="425" y="204" width="11" height="8" fill="#d0d0d0" stroke="#444"/>
<path d="M450 194L466 210M466 194L450 210" stroke="#d4d4d4" stroke-width="3.400"/>
<circle cx="575" cy="203" r="7.500" fill="#e8242c"/><circle cx="601.500" cy="203" r="7.500" fill="#2fa84a"/><circle cx="629" cy="203" r="7.500" fill="#0cb1ee"/>
<circle cx="656" cy="203" r="5.500" fill="#c4c4c4"/><circle cx="682" cy="203" r="6" fill="#d0d0d0"/>
<rect x="901" y="194" width="14" height="12" fill="#fff" stroke="#333"/><circle cx="913" cy="208" r="5" fill="#d99416"/><circle cx="913" cy="208" r="2" fill="#333"/>
<rect x="926" y="193" width="19" height="19" fill="#d0d0d0" stroke="#333"/><rect x="926" y="193" width="19" height="5" fill="#aaa" stroke="#333"/><circle cx="938" cy="207" r="5" fill="#d99416"/><circle cx="938" cy="207" r="2" fill="#333"/>

<!-- render -->
<g filter="url(#bl)">
<path d="M943 733H1293C1300 738 1301 744 1298 746C1270 760 1190 767 1137 767C1060 767 985 755 943 733Z" fill="#9355d1"/>
<path d="M948 716H1287L1293 733H943Z" fill="#96966c"/>
<path d="M1086 535Q1120 522 1154 540L1157 713H1088Z" fill="url(#dg)"/>
<g clip-path="url(#dc)">
<path d="M1087 577H1156M1118 530V713" stroke="#8f2512" stroke-width=".8"/>
<path d="M1111 530V577M1124 530V577M1087 577H1111M1124 577H1156" stroke="#96270f" stroke-width=".8"/>
<rect x="1089" y="602" width="23.500" height="55" fill="#a82c16" stroke="#8a2210" stroke-width=".8"/><rect x="1125.500" y="602" width="23.500" height="55" fill="#aa2e18" stroke="#8a2210" stroke-width=".8"/>
<rect x="1089.500" y="670" width="24.500" height="24" fill="#a82c16" stroke="#8a2210" stroke-width=".8"/><rect x="1126.500" y="670" width="24" height="24" fill="#a82c16" stroke="#8a2210" stroke-width=".8"/>
</g>
<path d="M1154 540L1159 523L1162.700 716H1157Z" fill="#3f3f3f"/>
<rect x="1110" y="586" width="18" height="8" fill="#ae9136"/><circle cx="1118" cy="569" r="3" fill="#b5a870"/>
<rect x="1151.500" y="567" width="2.500" height="33" fill="#c2a650"/>
<path d="M1088 714.500H1161V716H1088Z" fill="#ddd"/>
</g>
<path d="M948 716C975 640 1020 550 1086 516L1087.700 716Z" fill="#fff" filter="url(#cw)"/>
<path d="M1159 523C1205 545 1255 630 1287 716H1162.700Z" fill="#fff" filter="url(#cw)"/>
</svg>

</body></html>
